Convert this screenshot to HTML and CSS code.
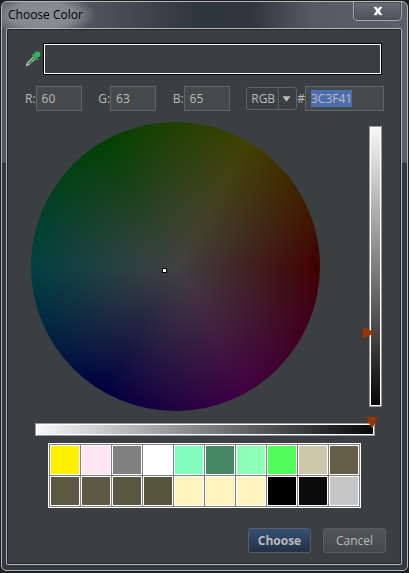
FILE: index.html
```html
<!DOCTYPE html>
<html lang="en">
<head>
<meta charset="utf-8">
<title>Choose Color</title>
<link rel="stylesheet" href="styles.css">
</head>
<body>
<div class="window" role="dialog" aria-labelledby="title">
  <header class="titlebar">
    <h1 class="title" id="title">Choose Color</h1>
    <button class="close" type="button" aria-label="Close">
      <svg width="12" height="10" viewBox="0 0 12 10"><path d="M1 .5h3.300L6 2.500 7.700.500H11L8 5 11 9.500H7.700L6 7.500 4.300 9.500H1L4 5z" fill="#fff" stroke="#40444c" stroke-width=".5"/></svg>
    </button>
  </header>
  <form class="content">
    <div class="preview-row">
      <button class="picker" type="button" aria-label="Pick a color from the screen">
        <svg width="16" height="16" viewBox="0 0 16 16">
          <path d="M9 5.500 2.500 12l-1 2.500L4 13.500 11 7" fill="none" stroke="#c4c6c6" stroke-width="1.200"/>
          <path d="M5.500 10.500h3L4.500 13.200 3 13z" fill="#28a745"/>
          <path d="m7.500 3.500 5.500 5.500" stroke="#28ab4c" stroke-width="2"/>
          <path d="M9 5.500 11.500 2.500" stroke="#28ab4c" stroke-width="4"/>
          <circle cx="12.600" cy="3.400" r="2.800" fill="#36b257"/>
        </svg>
      </button>
      <div class="preview"></div>
    </div>
    <div class="fields">
      <div class="field"><label for="red">R:</label><input class="text" id="red" value="60"></div>
      <div class="field"><label for="green">G:</label><input class="text" id="green" value="63"></div>
      <div class="field"><label for="blue">B:</label><input class="text" id="blue" value="65"></div>
      <div class="field">
        <span class="combo">
          <select aria-label="Color model"><option>RGB</option><option>HSB</option></select>
          <svg class="arrow" width="19" height="23" viewBox="0 0 19 23"><path d="M.500 0v23" stroke="#646464"/><path d="M5 9h9l-4.500 6z" fill="#bbb"/></svg>
        </span>
        <label for="hex">#</label><input class="text hex" id="hex" value="3C3F41">
      </div>
    </div>
    <div class="wheel-row">
      <div class="wheel"><span class="cursor"></span></div>
      <div class="track vertical"><input type="range" min="0" max="255" value="66" aria-label="Brightness"></div>
    </div>
    <div class="track horizontal"><input type="range" min="0" max="255" value="255" aria-label="Opacity"></div>
    <div class="palette">
      <button type="button" class="swatch yellow" aria-label="Yellow"></button>
      <button type="button" class="swatch pink" aria-label="Pink"></button>
      <button type="button" class="swatch gray" aria-label="Gray"></button>
      <button type="button" class="swatch white" aria-label="White"></button>
      <button type="button" class="swatch aqua" aria-label="Aqua"></button>
      <button type="button" class="swatch sea" aria-label="Sea green"></button>
      <button type="button" class="swatch mint" aria-label="Mint"></button>
      <button type="button" class="swatch green" aria-label="Green"></button>
      <button type="button" class="swatch sand" aria-label="Sand"></button>
      <button type="button" class="swatch bronze" aria-label="Bronze"></button>
      <button type="button" class="swatch olive" aria-label="Olive"></button>
      <button type="button" class="swatch olive" aria-label="Olive"></button>
      <button type="button" class="swatch moss" aria-label="Moss"></button>
      <button type="button" class="swatch moss-dark" aria-label="Dark moss"></button>
      <button type="button" class="swatch cream" aria-label="Cream"></button>
      <button type="button" class="swatch cream" aria-label="Cream"></button>
      <button type="button" class="swatch cream" aria-label="Cream"></button>
      <button type="button" class="swatch black" aria-label="Black"></button>
      <button type="button" class="swatch ink" aria-label="Ink"></button>
      <button type="button" class="swatch silver" aria-label="Silver"></button>
    </div>
    <footer class="actions">
      <button class="action primary" type="submit">Choose</button>
      <button class="action" type="button">Cancel</button>
    </footer>
  </form>
</div>
<script src="script.js"></script>
</body>
</html>
```
FILE: styles.css
```css
* {
  box-sizing: border-box;
}

body {
  margin: 0;
  padding: 1px 1px 2px;
  min-height: 100vh;
  display: flex;
  background: #1c1e20;
  color: #bbb;
  font: 12px/16px "Open Sans", "Noto Sans", sans-serif;
}

button,
input,
select {
  margin: 0;
  padding: 0;
  font: inherit;
  color: inherit;
}

.window {
  flex: 1;
  display: flex;
  flex-direction: column;
  padding: 0 5px 5px 4px;
  border: 1px solid #b4b8bc;
  border-radius: 6px 6px 5px 5px;
  background:
    radial-gradient(ellipse 54px 22px at 40px 13px, #8a8e92 0%, #85898e 60%, transparent 100%),
    linear-gradient(#50525900 0 160px, #303840 161px),
    linear-gradient(90deg, #555660 0, #50535c 90px, #2d353e 200px, #30363f 250px, #575a63 310px, #5c5f68 100%);
}

.titlebar {
  display: flex;
  justify-content: space-between;
  align-items: flex-start;
  height: 26px;
}

.title {
  margin: 0;
  padding: 5px 2px;
  font-size: 12px;
  font-weight: 400;
  color: #000;
}

.close {
  display: flex;
  align-items: center;
  justify-content: center;
  width: 49px;
  height: 19px;
  border: 1px solid #a7aab0;
  border-top: 0;
  border-radius: 0 0 5px 5px;
  background: linear-gradient(#6b6e76, #4e5159);
  box-shadow: inset 0 0 0 1px #4a4d55;
}

.content {
  flex: 1;
  display: flex;
  flex-direction: column;
  padding: 14px 15px 11px 18px;
  border: 1px solid #b4b8bc;
  border-radius: 2px;
  background: #3c3f41;
  box-shadow: inset 0 0 0 1px #202428;
}

.preview-row {
  display: flex;
  align-items: center;
  padding-right: 4px;
}

.picker {
  display: flex;
  width: 18px;
  border: 0;
  background: none;
}

.preview {
  flex: 1;
  height: 32px;
  border: 1px solid #000;
  box-shadow: inset 0 0 0 1px #fff;
  background: #3c3f41;
}

.fields {
  display: flex;
  justify-content: space-between;
  margin: 11px 2px 0 0;
}

.field {
  display: flex;
  align-items: center;
}

.text {
  width: 46px;
  height: 25px;
  padding: 0 5px;
  border: 1px solid #646464;
  background: #45494a;
  outline: 0;
}

.hex {
  width: 79px;
}

.text::selection {
  background: #4b6eaf;
  color: #bbb;
}

.combo {
  display: flex;
  width: 51px;
  height: 23px;
  border: 1px solid #646464;
  border-radius: 3px;
}

.combo select {
  flex: 1;
  width: 0;
  padding-left: 4px;
  border: 0;
  background: none;
  appearance: none;
}

.arrow {
  height: 21px;
}

.wheel-row {
  display: flex;
  justify-content: space-between;
  align-items: flex-start;
  margin: 11px 4px 0 6px;
}

.wheel {
  position: relative;
  width: 289px;
  aspect-ratio: 1;
  border-radius: 50%;
  background:
    radial-gradient(closest-side, #414141, #41414100),
    conic-gradient(from 90deg, #410000, #410041, #000041, #004141, #004100, #414100, #410000);
}

.cursor {
  position: absolute;
  left: 45%;
  top: 50%;
  width: 5px;
  height: 5px;
  margin: 1px 0 0 1px;
  border: 1px solid #000;
  background: #fff;
}

.track {
  position: relative;
  border: 1px solid #999;
  box-shadow: inset 0 0 0 1px #fff;
}

.vertical {
  width: 13px;
  height: 281px;
  margin-top: 4px;
  background: linear-gradient(#f8f8f8, #060606);
}

.horizontal {
  height: 13px;
  margin: 12px 11px 0 10px;
  background: linear-gradient(90deg, #fafafa, #060606);
}

.track input {
  position: absolute;
  appearance: none;
  background: none;
  outline: 0;
}

.vertical input {
  left: -7px;
  top: -4px;
  width: 12px;
  height: calc(100% + 8px);
  writing-mode: vertical-lr;
  direction: rtl;
}

.horizontal input {
  left: -4px;
  top: -7px;
  width: calc(100% + 8px);
  height: 12px;
}

.track input::-webkit-slider-thumb {
  appearance: none;
  width: 12px;
  height: 12px;
  background: #993300;
}

.vertical input::-webkit-slider-thumb {
  clip-path: polygon(0 0, 100% 50%, 0 100%);
}

.horizontal input::-webkit-slider-thumb {
  clip-path: polygon(0 0, 100% 0, 50% 100%);
}

.palette {
  display: grid;
  grid-template-columns: repeat(10, 30px);
  grid-auto-rows: 30px;
  gap: 1px;
  align-self: center;
  margin: 7px 2px 0 0;
  padding: 1px;
  border: 1px solid #fff;
  background: #808080;
}

.swatch {
  border: 1px solid #fff;
}

.yellow { background: #fff000; }
.pink { background: #ffe6f0; }
.gray { background: #808080; }
.white { background: #fff; }
.aqua { background: #82ffbe; }
.sea { background: #468764; }
.mint { background: #8cffb4; }
.green { background: #50ff5a; }
.sand { background: #cdc8aa; }
.bronze { background: #645f46; }
.olive { background: #5c5a42; }
.moss { background: #585840; }
.moss-dark { background: #56553e; }
.cream { background: #fff3be; }
.black { background: #000; }
.ink { background: #0b0b0b; }
.silver { background: #c6c6c6; }

.actions {
  display: flex;
  justify-content: flex-end;
  gap: 12px;
  margin-top: auto;
}

.action {
  width: 63px;
  height: 25px;
  border: 1px solid #5b5e60;
  border-radius: 3px;
  background: linear-gradient(#515658, #45494a);
}

.primary {
  background: linear-gradient(#365078, #233143);
  font-weight: 700;
}
```
FILE: script.js
```js
document.getElementById("hex").select();
```
